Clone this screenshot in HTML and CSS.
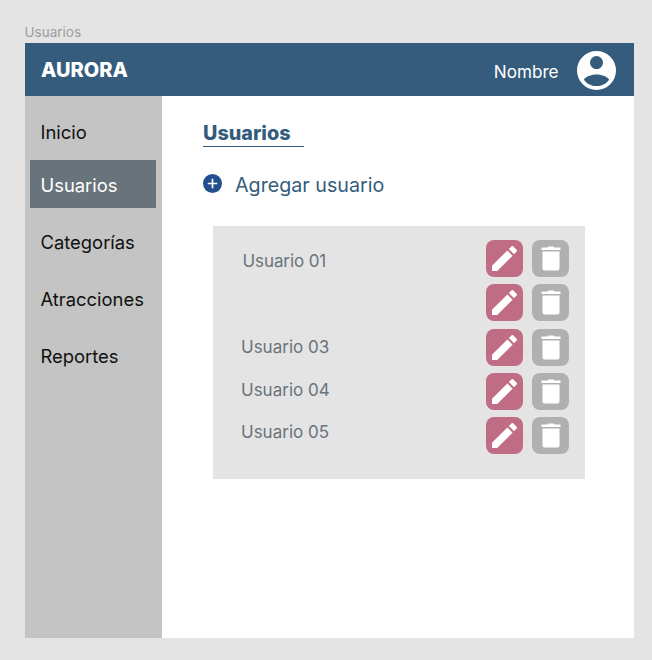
FILE: index.html
```html
<!DOCTYPE html>
<html lang="es">
<head>
<meta charset="utf-8">
<title>Usuarios</title>
<link rel="stylesheet" href="styles.css">
</head>
<body>
<svg class="symbols" aria-hidden="true">
  <symbol id="pencil" viewBox="3 3 18 18"><path d="M3 17.25V21h3.75L17.81 9.94l-3.75-3.75L3 17.25zM20.71 7.04a1 1 0 0 0 0-1.41l-2.34-2.34a1 1 0 0 0-1.41 0l-1.83 1.83 3.75 3.75 1.83-1.83z"/></symbol>
  <symbol id="trash" viewBox="0 0 20 25"><path d="M0.500 1.600h6L7.500.5h5l1 1.100h6v2.300H.5zM1.500 5.500h17v17a2 2 0 0 1-2 2h-13a2 2 0 0 1-2-2z"/></symbol>
</svg>
<div class="frame-label">Usuarios</div>
<div class="frame">
  <header class="header">
    <div class="brand">AURORA</div>
    <div class="account">
      <span class="name">Nombre</span>
      <svg class="avatar" viewBox="2 2 20 20"><path fill-rule="evenodd" d="M12 2a10 10 0 1 0 0 20 10 10 0 0 0 0-20zm0 2.600a3.350 3.350 0 1 1 0 6.700 3.350 3.350 0 0 1 0-6.700zM5.500 16.600C7 14.700 9.600 14 12 14s5 .7 6.500 2.600C17.200 18.700 14.800 20 12 20s-5.200-1.300-6.500-3.400z"/></svg>
    </div>
  </header>
  <div class="body">
    <nav class="sidebar">
      <a class="item">Inicio</a>
      <a class="item active">Usuarios</a>
      <a class="item">Categorías</a>
      <a class="item">Atracciones</a>
      <a class="item">Reportes</a>
    </nav>
    <main class="main">
      <h1 class="title">Usuarios</h1>
      <div class="add">
        <svg class="plus" viewBox="0 0 19 19"><circle cx="9.500" cy="9.500" r="9.500"/><path d="M9.500 4.800v9.400M4.800 9.500h9.400"/></svg>
        <span>Agregar usuario</span>
      </div>
      <section class="panel">
        <div class="users">
          <span class="first">Usuario 01</span>
          <span></span>
          <span>Usuario 03</span>
          <span>Usuario 04</span>
          <span>Usuario 05</span>
        </div>
        <div class="actions">
          <button class="edit"><svg><use href="#pencil"/></svg></button><button class="delete"><svg><use href="#trash"/></svg></button>
          <button class="edit"><svg><use href="#pencil"/></svg></button><button class="delete"><svg><use href="#trash"/></svg></button>
          <button class="edit"><svg><use href="#pencil"/></svg></button><button class="delete"><svg><use href="#trash"/></svg></button>
          <button class="edit"><svg><use href="#pencil"/></svg></button><button class="delete"><svg><use href="#trash"/></svg></button>
          <button class="edit"><svg><use href="#pencil"/></svg></button><button class="delete"><svg><use href="#trash"/></svg></button>
        </div>
      </section>
    </main>
  </div>
</div>
</body>
</html>
```

FILE: styles.css
```css
* { box-sizing: border-box; }
body {
  margin: 0;
  height: 660px;
  padding: 23px 18px 22px 24.5px;
  background: #e4e4e4;
  font-family: Inter, "Liberation Sans", sans-serif;
  font-weight: 400;
  overflow: hidden;
}
.symbols { display: none; }
.frame-label { height: 20px; line-height: 18px; font-size: 13.5px; color: #9d9d9d; }
.frame { width: 609px; height: 595px; display: flex; flex-direction: column; background: #fff; }
.header {
  height: 53px;
  padding: 0 18px 0 16.5px;
  display: flex;
  align-items: center;
  justify-content: space-between;
  background: #355c7d;
  color: #fff;
}
.brand { font-size: 20px; font-weight: 800; line-height: 24px; padding-top: 1px; }
.account { display: flex; align-items: center; gap: 18px; }
.name { font-size: 17.1px; line-height: 22px; padding-top: 4px; }
.avatar { width: 39px; height: 39px; fill: #fff; margin-top: 2px; }
.body { flex: 1; display: flex; }
.sidebar {
  width: 137px;
  padding: 12px 5.5px 0;
  display: flex;
  flex-direction: column;
  background: #c4c4c4;
}
.item { height: 48px; margin-bottom: 9px; padding: 2px 0 0 10.5px; font-size: 18.4px; line-height: 47px; color: #111; }
.item:first-child { margin-bottom: 4px; padding-top: 1px; }
.item.active { background: #69737c; color: #fff; }
.main { flex: 1; padding: 25px 0 0 41.5px; color: #355c7d; }
.title { width: 101px; height: 26px; margin: 0; border-bottom: 1px solid #355c7d; font-size: 19.8px; line-height: 25px; font-weight: 800; }
.add { display: flex; align-items: center; gap: 13px; height: 24px; margin-top: 26px; font-size: 19.7px; }
.plus { width: 19px; height: 19px; margin-top: -3px; fill: #22508f; stroke: #fff; stroke-width: 1.7; }
.plus circle { stroke: none; }
.panel {
  width: 372px;
  height: 252.5px;
  margin: 29px 0 0 10px;
  padding: 14.2px 15.7px 0 28px;
  display: flex;
  justify-content: space-between;
  background: #e4e4e4;
}
.users { display: grid; grid-auto-rows: 42.8px; font-size: 17px; line-height: 43px; color: #69737c; }
.first { padding-left: 1.5px; letter-spacing: -0.1px; }
.actions { display: grid; grid-template-columns: 37px 37px; grid-auto-rows: 37px; column-gap: 9px; row-gap: 7.3px; }
button { display: flex; align-items: center; justify-content: center; padding: 0; border: 0; border-radius: 8px; }
button svg { fill: #fff; }
.edit { background: #c06c84; }
.edit svg { width: 25px; height: 25px; }
.delete { background: #b0b0b0; }
.delete svg { width: 20px; height: 25px; }
```
